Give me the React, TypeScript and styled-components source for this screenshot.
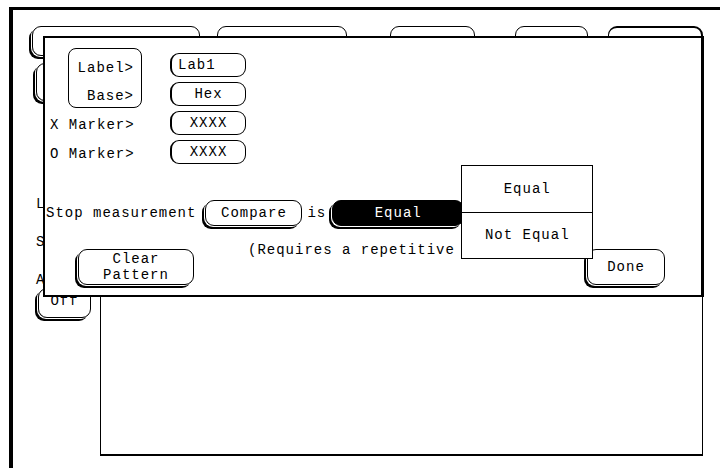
import styled, { createGlobalStyle, css } from "styled-components";

const GlobalStyle = createGlobalStyle`
  html, body {
    margin: 0;
    padding: 0;
    background: #fff;
  }
  body {
    font-family: "Liberation Mono", "DejaVu Sans Mono", monospace;
    color: #000;
  }
`;

const raised = css`
  border: 1px solid #000;
  border-radius: 9px;
  box-shadow: -1px 1px 0 #fff, -3px 3px 0 #000;
`;

const Page = styled.div`
  width: 720px;
  height: 468px;
  box-sizing: border-box;
  padding: 7px 0 0 9px;
  overflow: hidden;
`;

const Screen = styled.div`
  position: relative;
  height: 461px;
  box-sizing: border-box;
  border-top: 3px solid #000;
  border-left: 4px solid #000;
  font-size: 14px;
  letter-spacing: 1px;
`;

const TabRow = styled.div`
  display: flex;
  padding: 16px 0 0 19px;
`;

const Tab = styled.div<{ $w: number; $gap: number; $heavy?: "left" | "top" }>`
  width: ${(p) => p.$w}px;
  margin-left: ${(p) => p.$gap}px;
  height: 30px;
  box-sizing: border-box;
  border: 1px solid #000;
  border-radius: 9px;
  ${(p) => p.$heavy === "left" && raised}
  ${(p) =>
    p.$heavy === "top" &&
    css`
      border-width: 2px 2px 1px 1px;
    `}
`;

const SideKey = styled.div`
  ${raised};
  margin: 7px 0 0 23px;
  width: 100px;
  height: 38px;
  box-sizing: border-box;
`;

const Body = styled.div`
  display: flex;
`;

const LeftColumn = styled.div`
  width: 87px;
  box-sizing: border-box;
  padding: 95px 0 0 23px;
  display: flex;
  flex-direction: column;
  align-items: flex-start;
`;

const Letter = styled.div`
  line-height: 16px;
  & + & {
    margin-top: 22px;
  }
`;

const OffKey = styled.div`
  ${raised};
  margin-left: 2px;
  width: 53px;
  height: 30px;
  box-sizing: border-box;
  padding-bottom: 5px;
  display: flex;
  align-items: center;
  justify-content: center;
`;

const Panel = styled.div`
  margin-top: 190px;
  width: 603px;
  height: 165px;
  box-sizing: border-box;
  border: 1px solid #000;
  border-bottom-width: 2px;
`;

const Dialog = styled.div`
  position: absolute;
  left: 30px;
  top: 26px;
  width: 661px;
  height: 261px;
  box-sizing: border-box;
  border: 2px solid #000;
  border-right-width: 3px;
  background: #fff;
  display: flex;
  flex-direction: column;
`;

const TopGrid = styled.div`
  display: grid;
  grid-template-columns: 120px 76px;
  grid-template-rows: repeat(4, 29px);
  margin: 10px 0 0 5px;
`;

const GroupBox = styled.div`
  grid-column: 1;
  grid-row: 1 / span 2;
  margin-left: 18px;
  width: 74px;
  height: 60px;
  box-sizing: border-box;
  border: 1px solid #000;
  border-radius: 8px;
  padding: 11px 7px 0 0;
  display: flex;
  flex-direction: column;
  align-items: flex-end;
  gap: 12px;
  line-height: 16px;
`;

const MarkerLabel = styled.div`
  grid-column: 1;
  align-self: end;
  line-height: 16px;
  margin-bottom: 2px;
`;

const Field = styled.div<{ $left?: boolean }>`
  grid-column: 2;
  align-self: end;
  height: 24px;
  box-sizing: border-box;
  border: 1px solid #000;
  border-left-width: 2px;
  border-radius: 9px;
  display: flex;
  align-items: center;
  justify-content: ${(p) => (p.$left ? "flex-start" : "center")};
  padding: 0 6px;
`;

const StopRow = styled.div`
  display: flex;
  align-items: center;
  height: 26px;
  margin: 36px 0 0 1px;
`;

const Word = styled.span<{ $gap?: number }>`
  margin-left: ${(p) => p.$gap ?? 0}px;
`;

const Key = styled.div<{ $w: number; $h: number; $on?: boolean }>`
  ${raised};
  width: ${(p) => p.$w}px;
  height: ${(p) => p.$h}px;
  box-sizing: border-box;
  display: flex;
  flex-direction: column;
  align-items: center;
  justify-content: center;
  line-height: 16px;
  background: ${(p) => (p.$on ? "#000" : "#fff")};
  color: ${(p) => (p.$on ? "#fff" : "#000")};
`;

const Selector = styled.div`
  position: relative;
  margin-left: 6px;
`;

const Menu = styled.div`
  position: absolute;
  left: 129px;
  top: -35px;
  width: 132px;
  height: 94px;
  box-sizing: border-box;
  border: 1px solid #000;
  background: #fff;
  display: flex;
  flex-direction: column;
  z-index: 2;
`;

const MenuItem = styled.div`
  flex: 1;
  display: flex;
  align-items: center;
  justify-content: center;
  & + & {
    border-top: 1px solid #000;
  }
`;

const BottomRow = styled.div`
  display: flex;
  align-items: flex-start;
  margin-top: 23px;
  padding: 0 36px 0 33px;
`;

const Note = styled.div`
  margin: -7px 0 0 54px;
  line-height: 16px;
  white-space: nowrap;
`;

const Spacer = styled.div`
  flex: 1;
`;

const tabs = [
  { w: 168, gap: 0, heavy: "left" as const },
  { w: 130, gap: 17 },
  { w: 85, gap: 43 },
  { w: 73, gap: 40 },
  { w: 95, gap: 20, heavy: "top" as const },
];

const App = () => {
  return (
    <Page>
      <GlobalStyle />
      <Screen>
        <TabRow>
          {tabs.map((t, i) => (
            <Tab key={i} $w={t.w} $gap={t.gap} $heavy={t.heavy} />
          ))}
        </TabRow>
        <SideKey />
        <Body>
          <LeftColumn>
            <Letter>L</Letter>
            <Letter>S</Letter>
            <Letter>A</Letter>
            <OffKey>Off</OffKey>
          </LeftColumn>
          <Panel />
        </Body>

        <Dialog>
          <TopGrid>
            <GroupBox>
              <span>Label&gt;</span>
              <span>Base&gt;</span>
            </GroupBox>
            <Field $left style={{ gridRow: 1 }}>
              Lab1
            </Field>
            <Field style={{ gridRow: 2 }}>Hex</Field>
            <MarkerLabel style={{ gridRow: 3 }}>X Marker&gt;</MarkerLabel>
            <Field style={{ gridRow: 3 }}>XXXX</Field>
            <MarkerLabel style={{ gridRow: 4 }}>O Marker&gt;</MarkerLabel>
            <Field style={{ gridRow: 4 }}>XXXX</Field>
          </TopGrid>

          <StopRow>
            <Word>Stop measurement</Word>
            <Word $gap={9}>
              <Key $w={97} $h={26}>
                Compare
              </Key>
            </Word>
            <Word $gap={5}>is</Word>
            <Selector>
              <Key $w={132} $h={26} $on>
                Equal
              </Key>
              <Menu>
                <MenuItem>Equal</MenuItem>
                <MenuItem>Not Equal</MenuItem>
              </Menu>
            </Selector>
          </StopRow>

          <BottomRow>
            <Key $w={116} $h={36}>
              <span>Clear</span>
              <span>Pattern</span>
            </Key>
            <Note>(Requires a repetitive</Note>
            <Spacer />
            <Key $w={78} $h={36}>
              Done
            </Key>
          </BottomRow>
        </Dialog>
      </Screen>
    </Page>
  );
};

export default App;
